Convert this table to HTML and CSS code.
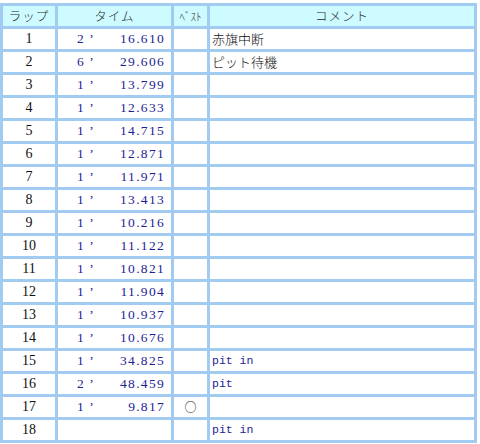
FILE: index.html
```html
<!DOCTYPE html>
<html lang="ja">
<head>
<meta charset="utf-8">
<link rel="stylesheet" href="styles.css">
</head>
<body>
<table class="laps">
  <colgroup>
    <col class="c-lap"><col class="c-time"><col class="c-best"><col class="c-comment">
  </colgroup>
  <thead>
    <tr>
      <th>ラップ</th>
      <th class="h-time">タイム</th>
      <th class="h-best">ﾍﾞｽﾄ</th>
      <th class="h-comment">コメント</th>
    </tr>
  </thead>
  <tbody>
    <tr><td class="lap">1</td><td class="time"><span class="min">2 ’</span><span class="sec">16.610</span></td><td class="best"></td><td class="comment jp">赤旗中断</td></tr>
    <tr><td class="lap">2</td><td class="time"><span class="min">6 ’</span><span class="sec">29.606</span></td><td class="best"></td><td class="comment jp">ピット待機</td></tr>
    <tr><td class="lap">3</td><td class="time"><span class="min">1 ’</span><span class="sec">13.799</span></td><td class="best"></td><td class="comment"></td></tr>
    <tr><td class="lap">4</td><td class="time"><span class="min">1 ’</span><span class="sec">12.633</span></td><td class="best"></td><td class="comment"></td></tr>
    <tr><td class="lap">5</td><td class="time"><span class="min">1 ’</span><span class="sec">14.715</span></td><td class="best"></td><td class="comment"></td></tr>
    <tr><td class="lap">6</td><td class="time"><span class="min">1 ’</span><span class="sec">12.871</span></td><td class="best"></td><td class="comment"></td></tr>
    <tr><td class="lap">7</td><td class="time"><span class="min">1 ’</span><span class="sec">11.971</span></td><td class="best"></td><td class="comment"></td></tr>
    <tr><td class="lap">8</td><td class="time"><span class="min">1 ’</span><span class="sec">13.413</span></td><td class="best"></td><td class="comment"></td></tr>
    <tr><td class="lap">9</td><td class="time"><span class="min">1 ’</span><span class="sec">10.216</span></td><td class="best"></td><td class="comment"></td></tr>
    <tr><td class="lap">10</td><td class="time"><span class="min">1 ’</span><span class="sec">11.122</span></td><td class="best"></td><td class="comment"></td></tr>
    <tr><td class="lap">11</td><td class="time"><span class="min">1 ’</span><span class="sec">10.821</span></td><td class="best"></td><td class="comment"></td></tr>
    <tr><td class="lap">12</td><td class="time"><span class="min">1 ’</span><span class="sec">11.904</span></td><td class="best"></td><td class="comment"></td></tr>
    <tr><td class="lap">13</td><td class="time"><span class="min">1 ’</span><span class="sec">10.937</span></td><td class="best"></td><td class="comment"></td></tr>
    <tr><td class="lap">14</td><td class="time"><span class="min">1 ’</span><span class="sec">10.676</span></td><td class="best"></td><td class="comment"></td></tr>
    <tr><td class="lap">15</td><td class="time"><span class="min">1 ’</span><span class="sec">34.825</span></td><td class="best"></td><td class="comment mono">pit in</td></tr>
    <tr><td class="lap">16</td><td class="time"><span class="min">2 ’</span><span class="sec">48.459</span></td><td class="best"></td><td class="comment mono">pit</td></tr>
    <tr><td class="lap">17</td><td class="time"><span class="min">1 ’</span><span class="sec">9.817</span></td><td class="best">○</td><td class="comment"></td></tr>
    <tr><td class="lap">18</td><td class="time"></td><td class="best"></td><td class="comment mono">pit in</td></tr>
  </tbody>
</table>
</body>
</html>
```
FILE: styles.css
```css
html, body {
  margin: 0;
  padding: 0;
  background: #ffffff;
}
body {
  padding-top: 3px;
  height: 441px;
  overflow: hidden;
  font-family: "Noto Sans CJK JP", sans-serif;
}
.laps {
  table-layout: fixed;
  width: 477px;
  border-collapse: separate;
  border-spacing: 3px;
  background: #a2cbf2;
}
.c-lap { width: 52px; }
.c-time { width: 113px; }
.c-best { width: 33px; }
.c-comment { width: 264px; }

.laps th,
.laps td {
  height: 20px;
  padding: 0;
  box-sizing: border-box;
  line-height: 20px;
  white-space: nowrap;
  overflow: hidden;
}
.laps th {
  background: #cdfbff;
  font-family: "Noto Sans CJK JP", sans-serif;
  font-weight: 300;
  font-size: 12.5px;
  color: #2a2a2a;
  text-align: center;
  letter-spacing: 1px;
}
.laps th.h-best {
  font-size: 11px;
  letter-spacing: 0;
}
.laps td {
  background: #ffffff;
}
.lap {
  text-align: center;
  font-family: "Liberation Serif", serif;
  font-size: 14px;
  color: #111111;
}
.time {
  color: #1e1e96;
  font-family: "Liberation Serif", serif;
  font-size: 13.5px;
}
.time .min,
.time .sec {
  display: inline-block;
}
.time .min {
  float: left;
  padding-left: 19px;
  letter-spacing: 1px;
}
.time .sec {
  float: right;
  padding-right: 6px;
  letter-spacing: 1.3px;
}
.best {
  text-align: center;
  font-family: "Noto Sans CJK JP", sans-serif;
  font-size: 12px;
  color: #222222;
}
.comment {
  padding-left: 2px !important;
  text-align: left;
}
.comment.jp {
  font-family: "Noto Sans CJK JP", sans-serif;
  font-weight: 300;
  font-size: 13px;
  color: #111111;
}
.comment.mono {
  font-family: "Liberation Mono", monospace;
  font-size: 11.5px;
  color: #1e1e96;
}
```
